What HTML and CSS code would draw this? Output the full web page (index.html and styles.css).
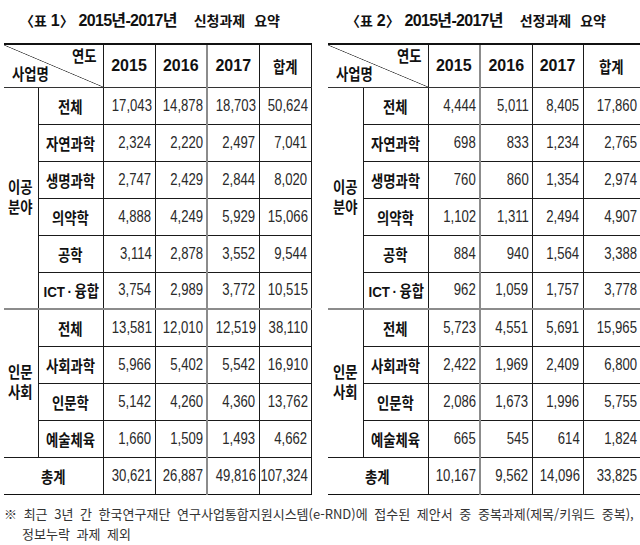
FILE: index.html
```html
<!DOCTYPE html>
<html lang="ko">
<head>
<meta charset="utf-8">
<link rel="stylesheet" href="styles.css">
</head>
<body>
<div class="page">
  <div class="tables">
    <section class="block b1">
      <h2 class="title"><span class="g1">〈표 <span class="d">1</span>〉</span> <span class="g2">2015년-2017년</span> <span class="g3">신청과제</span> <span class="g4">요약</span></h2>
      <table class="t t1">
        <colgroup><col class="c-grp1"><col class="c-lab"><col class="c-n"><col class="c-n"><col class="c-n gray"><col class="c-n"></colgroup>
        <tr class="head">
          <th colspan="2" class="diag"><div class="diag-in"><span class="yr">연도</span><span class="biz">사업명</span></div></th>
          <th>2015</th><th>2016</th><th>2017</th><th class="last"><span class="k">합계</span></th>
        </tr>
        <tr><th rowspan="6" class="grp"><span class="k">이공<br>분야</span></th><th class="lab"><span class="k">전체</span></th><td><span>17,043</span></td><td><span>14,878</span></td><td><span>18,703</span></td><td class="last"><span>50,624</span></td></tr>
        <tr><th class="lab"><span class="k">자연과학</span></th><td><span>2,324</span></td><td><span>2,220</span></td><td><span>2,497</span></td><td class="last"><span>7,041</span></td></tr>
        <tr><th class="lab"><span class="k">생명과학</span></th><td><span>2,747</span></td><td><span>2,429</span></td><td><span>2,844</span></td><td class="last"><span>8,020</span></td></tr>
        <tr><th class="lab"><span class="k">의약학</span></th><td><span>4,888</span></td><td><span>4,249</span></td><td><span>5,929</span></td><td class="last"><span>15,066</span></td></tr>
        <tr><th class="lab"><span class="k">공학</span></th><td><span>3,114</span></td><td><span>2,878</span></td><td><span>3,552</span></td><td class="last"><span>9,544</span></td></tr>
        <tr><th class="lab"><span class="k">ICT<span class="dot">·</span>융합</span></th><td><span>3,754</span></td><td><span>2,989</span></td><td><span>3,772</span></td><td class="last"><span>10,515</span></td></tr>
        <tr class="sec"><th rowspan="4" class="grp"><span class="k">인문<br>사회</span></th><th class="lab"><span class="k">전체</span></th><td><span>13,581</span></td><td><span>12,010</span></td><td><span>12,519</span></td><td class="last"><span>38,110</span></td></tr>
        <tr><th class="lab"><span class="k">사회과학</span></th><td><span>5,966</span></td><td><span>5,402</span></td><td><span>5,542</span></td><td class="last"><span>16,910</span></td></tr>
        <tr><th class="lab"><span class="k">인문학</span></th><td><span>5,142</span></td><td><span>4,260</span></td><td><span>4,360</span></td><td class="last"><span>13,762</span></td></tr>
        <tr><th class="lab"><span class="k">예술체육</span></th><td><span>1,660</span></td><td><span>1,509</span></td><td><span>1,493</span></td><td class="last"><span>4,662</span></td></tr>
        <tr class="tot"><th colspan="2" class="lab first"><span class="k">총계</span></th><td><span>30,621</span></td><td><span>26,887</span></td><td><span>49,816</span></td><td class="last"><span>107,324</span></td></tr>
      </table>
    </section>
    <section class="block b2">
      <h2 class="title"><span class="g1">〈표 <span class="d">2</span>〉</span> <span class="g2">2015년-2017년</span> <span class="g3">선정과제</span> <span class="g4">요약</span></h2>
      <table class="t t2">
        <colgroup><col class="c-grp2"><col class="c-lab"><col class="c-n"><col class="c-n gray"><col class="c-n2"><col class="c-n3"></colgroup>
        <tr class="head">
          <th colspan="2" class="diag"><div class="diag-in"><span class="yr">연도</span><span class="biz">사업명</span></div></th>
          <th>2015</th><th>2016</th><th>2017</th><th class="last"><span class="k">합계</span></th>
        </tr>
        <tr><th rowspan="6" class="grp"><span class="k">이공<br>분야</span></th><th class="lab"><span class="k">전체</span></th><td><span>4,444</span></td><td><span>5,011</span></td><td><span>8,405</span></td><td class="last"><span>17,860</span></td></tr>
        <tr><th class="lab"><span class="k">자연과학</span></th><td><span>698</span></td><td><span>833</span></td><td><span>1,234</span></td><td class="last"><span>2,765</span></td></tr>
        <tr><th class="lab"><span class="k">생명과학</span></th><td><span>760</span></td><td><span>860</span></td><td><span>1,354</span></td><td class="last"><span>2,974</span></td></tr>
        <tr><th class="lab"><span class="k">의약학</span></th><td><span>1,102</span></td><td><span>1,311</span></td><td><span>2,494</span></td><td class="last"><span>4,907</span></td></tr>
        <tr><th class="lab"><span class="k">공학</span></th><td><span>884</span></td><td><span>940</span></td><td><span>1,564</span></td><td class="last"><span>3,388</span></td></tr>
        <tr><th class="lab"><span class="k">ICT<span class="dot">·</span>융합</span></th><td><span>962</span></td><td><span>1,059</span></td><td><span>1,757</span></td><td class="last"><span>3,778</span></td></tr>
        <tr class="sec"><th rowspan="4" class="grp"><span class="k">인문<br>사회</span></th><th class="lab"><span class="k">전체</span></th><td><span>5,723</span></td><td><span>4,551</span></td><td><span>5,691</span></td><td class="last"><span>15,965</span></td></tr>
        <tr><th class="lab"><span class="k">사회과학</span></th><td><span>2,422</span></td><td><span>1,969</span></td><td><span>2,409</span></td><td class="last"><span>6,800</span></td></tr>
        <tr><th class="lab"><span class="k">인문학</span></th><td><span>2,086</span></td><td><span>1,673</span></td><td><span>1,996</span></td><td class="last"><span>5,755</span></td></tr>
        <tr><th class="lab"><span class="k">예술체육</span></th><td><span>665</span></td><td><span>545</span></td><td><span>614</span></td><td class="last"><span>1,824</span></td></tr>
        <tr class="tot"><th colspan="2" class="lab first"><span class="k">총계</span></th><td><span>10,167</span></td><td><span>9,562</span></td><td><span>14,096</span></td><td class="last"><span>33,825</span></td></tr>
      </table>
    </section>
  </div>
  <p class="note">※ 최근 3년 간 한국연구재단 연구사업통합지원시스템(e-RND)에 접수된 제안서 중 중복과제(제목/키워드 중복),<br>정보누락 과제 제외</p>
</div>
</body>
</html>
```
FILE: styles.css
```css
* { box-sizing: border-box; }
html, body { margin: 0; padding: 0; background: #fff; }
body {
  font-family: "Liberation Sans", "Noto Sans CJK KR", sans-serif;
  color: #111;
}
.page {
  width: 640px;
  height: 545px;
  padding-left: 4px;
  display: flex;
  flex-direction: column;
}
.tables { display: flex; gap: 17px; }
.block { display: flex; flex-direction: column; }
.b1 { width: 307px; }
.b2 { width: 312px; }
.title {
  margin: 0;
  height: 43px;
  padding: 11px 0 0 16px;
  font-size: 14px;
  line-height: 20px;
  font-weight: 700;
  text-align: left;
  white-space: nowrap;
}
.b2 .title { padding-left: 18px; }
.title .d { font-size: 16px; }
.title .g2 { margin-left: 1px; font-size: 16px; letter-spacing: -0.7px; }
.title .g3 { margin-left: 13px; }
.title .g4 { margin-left: 5px; }
.t {
  border-collapse: collapse;
  table-layout: fixed;
  width: 100%;
}
.c-grp1 { width: 34px; }
.c-grp2 { width: 35px; }
.c-lab { width: 65px; }
.c-n { width: 52px; }
.c-n2 { width: 51px; }
.c-n3 { width: 57px; }
col.gray { border-left: 2px solid #8c8c8c; }
.t th, .t td {
  border: 1px solid #1a1a1a;
  padding: 0;
  height: 37px;
  vertical-align: middle;
}
.t td {
  text-align: right;
  padding-right: 3px;
  font-size: 16px;
  font-weight: 400;
  color: #2a2a2a;
  white-space: nowrap;
}
.t td span {
  display: inline-block;
  margin-left: -3em;
  transform: scaleX(0.82);
  transform-origin: 100% 50%;
}
.t th {
  font-weight: 700;
  font-size: 16px;
  text-align: center;
  white-space: nowrap;
}
.t th .k {
  display: inline-block;
  font-size: 15.5px;
  transform: scaleX(0.86);
  transform-origin: 50% 50%;
}
.t th .k .dot { margin: 0 3px; }
.t .head th { height: 43px; border-top: 2px solid #111; border-bottom: 1px solid #333; }
.t .grp, .t .first, .t .diag { border-left: none; }
.t .grp .k { line-height: 20px; }
.t2 .last { border-right: none; }
.t .sec th, .t .sec td { border-top: 2px solid #8c8c8c; }
.t .tot th, .t .tot td { border-top: 1px solid #111; border-bottom: 1px solid #111; }
.t2 tr:not(.head):not(.tot):not(.sec) td,
.t2 tr:not(.head):not(.tot):not(.sec) .lab { border-top-color: #6a6a6a; }
.diag {
  padding: 0;
  background: linear-gradient(to top right, transparent calc(50% - 0.7px), #444 50%, transparent calc(50% + 0.7px));
}
.diag-in {
  height: 41px;
  display: flex;
  flex-direction: column;
  justify-content: space-between;
  padding: 3px 6px 2px 8px;
  font-size: 15.5px;
  line-height: 18px;
}
.diag-in span { display: inline-block; transform: scaleX(0.86); }
.yr { align-self: flex-end; transform-origin: 100% 50%; }
.biz { align-self: flex-start; transform-origin: 0 50%; }
.note {
  margin: 9px 0 0;
  padding-left: 18px;
  text-indent: -18px;
  font-family: "Noto Sans CJK KR", sans-serif;
  font-size: 13px;
  line-height: 20px;
  color: #333;
  word-spacing: 3px;
  white-space: nowrap;
}
```
